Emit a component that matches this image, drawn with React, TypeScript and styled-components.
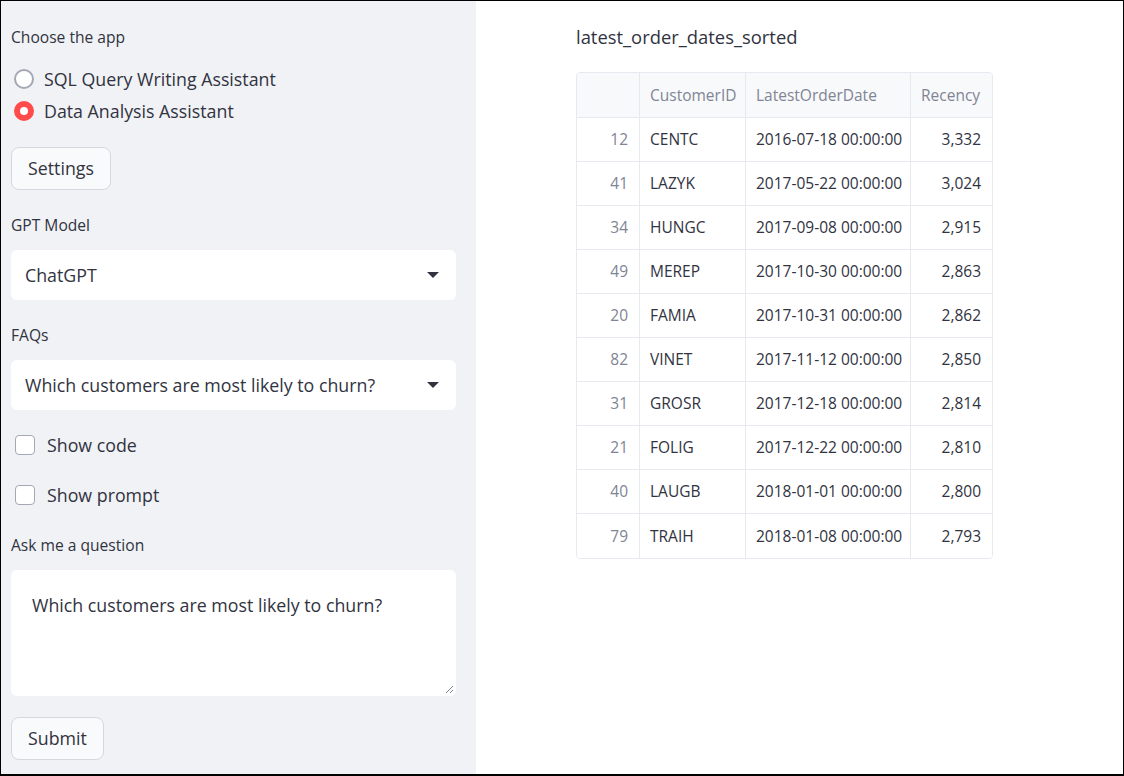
import React from "react";
import styled, { createGlobalStyle } from "styled-components";

const Global = createGlobalStyle`
  html, body { margin: 0; padding: 0; }
  body { font-family: "Open Sans", "Liberation Sans", sans-serif; color: #31333f; }
  * { box-sizing: border-box; }
`;

const Frame = styled.div`
  width: 1124px;
  height: 776px;
  border: 1px solid #000;
  border-bottom-width: 2px;
  display: flex;
  overflow: hidden;
  background: #fff;
`;

const Sidebar = styled.aside`
  width: 475px;
  flex: none;
  background: #f0f2f6;
  padding: 26px 20px 0 10px;
  display: flex;
  flex-direction: column;
`;

const Label = styled.div<{ $mt: number }>`
  margin-top: ${(p) => p.$mt}px;
  font-size: 15.6px;
  line-height: 20px;
  height: 20px;
  color: #31333f;
  white-space: nowrap;
`;

const RadioGroup = styled.div`
  margin-top: 16px;
  display: flex;
  flex-direction: column;
`;

const RadioRow = styled.div`
  height: 32px;
  display: flex;
  align-items: center;
  gap: 10px;
  font-size: 17.8px;
  padding-left: 3px;
`;

const RadioDot = styled.span<{ $on?: boolean }>`
  width: 20px;
  height: 20px;
  border-radius: 50%;
  flex: none;
  background: #fff;
  border: ${(p) => (p.$on ? "6px solid #ff4b4b" : "2px solid #a3a8b4")};
`;

const Button = styled.button<{ $mt: number; $w: number }>`
  margin-top: ${(p) => p.$mt}px;
  width: ${(p) => p.$w}px;
  height: 43px;
  border: 1px solid #d6d8de;
  border-radius: 8px;
  background: #f9fafb;
  font-family: inherit;
  font-size: 17.8px;
  line-height: 40px;
  color: #31333f;
  text-align: center;
  padding: 0 0 1px;
`;

const Select = styled.div<{ $mt: number }>`
  margin-top: ${(p) => p.$mt}px;
  height: 50px;
  background: #fff;
  border-radius: 6px;
  display: flex;
  align-items: center;
  justify-content: space-between;
  padding: 0 17px 0 14px;
  font-size: 17.8px;
  white-space: nowrap;
`;

const Caret = styled.span`
  width: 0;
  height: 0;
  border-left: 6px solid transparent;
  border-right: 6px solid transparent;
  border-top: 6px solid #31333f;
`;

const CheckRow = styled.div<{ $mt: number }>`
  margin-top: ${(p) => p.$mt}px;
  height: 24px;
  display: flex;
  align-items: center;
  gap: 12px;
  padding-left: 4px;
  font-size: 17.8px;
`;

const Box = styled.span`
  width: 20px;
  height: 20px;
  border: 1.5px solid #a3a8b4;
  border-radius: 4px;
  background: #fff;
  flex: none;
`;

const TextArea = styled.div`
  margin-top: 15px;
  height: 126px;
  background: #fff;
  border-radius: 6px;
  padding: 22px 21px;
  font-size: 17.8px;
  line-height: 26px;
  position: relative;
`;

const Grip = styled.svg`
  position: absolute;
  right: 2px;
  bottom: 2px;
`;

const Main = styled.main`
  flex: 1;
  padding: 25px 0 0 100px;
`;

const Title = styled.div`
  font-size: 18.4px;
  line-height: 22px;
  color: #31333f;
`;

const Table = styled.div`
  margin-top: 24px;
  width: 417px;
  border: 1px solid #e6e9ef;
  border-radius: 4px;
  overflow: hidden;
  display: grid;
  grid-template-columns: 63px 106px 165px 81px;
  grid-template-rows: 45px repeat(10, 44px);
`;

const Cell = styled.div<{ $head?: boolean; $idx?: boolean; $num?: boolean; $last?: boolean; $lastRow?: boolean }>`
  display: flex;
  align-items: center;
  justify-content: ${(p) => (p.$idx || p.$num ? "flex-end" : "flex-start")};
  padding: 0 11px 1px 10px;
  font-size: 15.5px;
  color: ${(p) => (p.$head || p.$idx ? "#808495" : "#31333f")};
  background: ${(p) => (p.$head ? "#f8f9fb" : "#fff")};
  border-right: ${(p) => (p.$last ? "none" : "1px solid #e6e9ef")};
  border-bottom: ${(p) => (p.$lastRow ? "none" : "1px solid #e6e9ef")};
  white-space: nowrap;
`;

const rows: [number, string, string, string][] = [
  [12, "CENTC", "2016-07-18 00:00:00", "3,332"],
  [41, "LAZYK", "2017-05-22 00:00:00", "3,024"],
  [34, "HUNGC", "2017-09-08 00:00:00", "2,915"],
  [49, "MEREP", "2017-10-30 00:00:00", "2,863"],
  [20, "FAMIA", "2017-10-31 00:00:00", "2,862"],
  [82, "VINET", "2017-11-12 00:00:00", "2,850"],
  [31, "GROSR", "2017-12-18 00:00:00", "2,814"],
  [21, "FOLIG", "2017-12-22 00:00:00", "2,810"],
  [40, "LAUGB", "2018-01-01 00:00:00", "2,800"],
  [79, "TRAIH", "2018-01-08 00:00:00", "2,793"],
];

export default function App() {
  return (
    <>
      <Global />
      <Frame>
        <Sidebar>
          <Label $mt={0}>Choose the app</Label>
          <RadioGroup>
            <RadioRow>
              <RadioDot />
              SQL Query Writing Assistant
            </RadioRow>
            <RadioRow>
              <RadioDot $on />
              Data Analysis Assistant
            </RadioRow>
          </RadioGroup>
          <Button $mt={20} $w={100}>Settings</Button>
          <Label $mt={25}>GPT Model</Label>
          <Select $mt={15}>
            ChatGPT
            <Caret />
          </Select>
          <Label $mt={25}>FAQs</Label>
          <Select $mt={15}>
            Which customers are most likely to churn?
            <Caret />
          </Select>
          <CheckRow $mt={23}>
            <Box />
            Show code
          </CheckRow>
          <CheckRow $mt={26}>
            <Box />
            Show prompt
          </CheckRow>
          <Label $mt={28}>Ask me a question</Label>
          <TextArea>
            Which customers are most likely to churn?
            <Grip width="10" height="10" viewBox="0 0 10 10">
              <path d="M9 2 L2 9 M9 6 L6 9" stroke="#808495" strokeWidth="1" />
            </Grip>
          </TextArea>
          <Button $mt={21} $w={93}>Submit</Button>
        </Sidebar>
        <Main>
          <Title>latest_order_dates_sorted</Title>
          <Table>
            <Cell $head />
            <Cell $head>CustomerID</Cell>
            <Cell $head>LatestOrderDate</Cell>
            <Cell $head $last>Recency</Cell>
            {rows.map((r, i) => {
              const lr = i === rows.length - 1;
              return (
                <React.Fragment key={r[0]}>
                  <Cell $idx $lastRow={lr}>{r[0]}</Cell>
                  <Cell $lastRow={lr}>{r[1]}</Cell>
                  <Cell $lastRow={lr}>{r[2]}</Cell>
                  <Cell $num $last $lastRow={lr}>{r[3]}</Cell>
                </React.Fragment>
              );
            })}
          </Table>
        </Main>
      </Frame>
    </>
  );
}
